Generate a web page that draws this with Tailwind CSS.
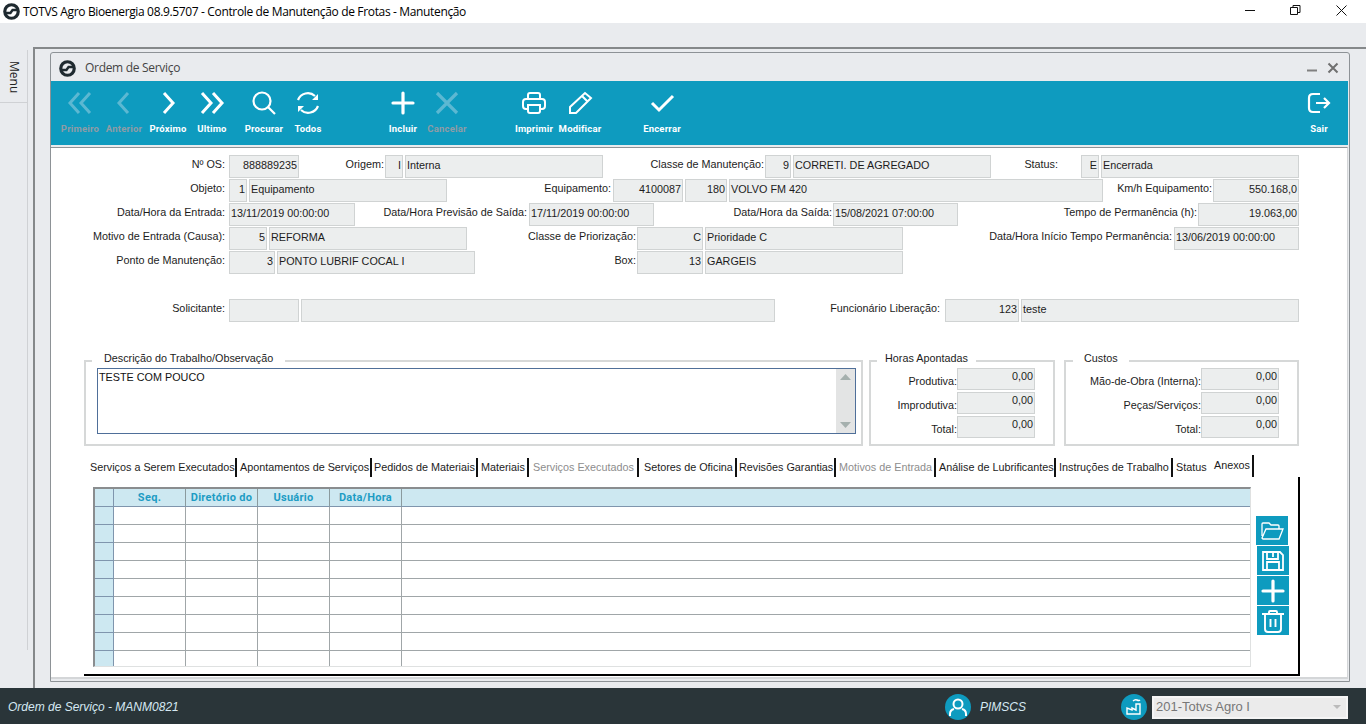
<!DOCTYPE html>
<html lang="pt"><head><meta charset="utf-8">
<script src="https://cdn.jsdelivr.net/npm/@tailwindcss/browser@4"></script>
<title>Ordem de Serviço</title></head>
<body class="w-[1366px] h-[724px] overflow-hidden flex flex-col bg-[#e9ebee] font-['Liberation_Sans',sans-serif] text-[10.800px] text-[#1c1c1c]">
<!-- title bar -->
<header class="h-[23px] bg-white flex items-center shrink-0">
  <svg class="ml-[3px] w-[17px] h-[17px]" viewBox="0 0 24 24" fill="none" stroke="#1f2a30"><circle cx="12" cy="12" r="9.500" stroke-width="4.500"/><path d="M4 14H10.500L13.500 10H20" stroke-width="3.500"/></svg>
  <span class="ml-[3px] text-[12px] text-black whitespace-nowrap font-['Open_Sans',sans-serif] tracking-[-0.35px]">TOTVS Agro Bioenergia 08.9.5707 - Controle de Manutenção de Frotas - Manutenção</span>
  <div class="ml-auto flex items-center">
    <svg class="w-[46px] h-[23px]" viewBox="0 0 46 23"><path d="M13 10.500H23" stroke="#111" fill="none"/></svg>
    <svg class="w-[46px] h-[23px]" viewBox="0 0 46 23"><path d="M12.500 7.500h7v7h-7zM15 7.500V5.500h7v7h-2.500" stroke="#111" fill="none"/></svg>
    <svg class="w-[46px] h-[23px] mr-[-4px]" viewBox="0 0 46 23"><path d="M12.500 5.500l10 10M22.500 5.500l-10 10" stroke="#111" fill="none"/></svg>
  </div>
</header>
<main class="flex-1 flex min-h-0">
  <!-- menu rail -->
  <aside class="w-[33px] shrink-0 pt-[27px]">
    <div class="w-[28px] h-[600px] border-r border-[#cfd1d4]">
      <div class="h-[53px] border-b border-[#cfd1d4] flex justify-center pt-[11px]"><span class="[writing-mode:vertical-rl] text-[12px] h-[32px] leading-[24px] text-[#222] font-['Open_Sans',sans-serif]">Menu</span></div>
    </div>
  </aside>
  <!-- frame -->
  <div class="flex-1 mt-[24px] border-l-2 border-t-2 border-[#85888a] pl-[15px] pt-[3px]">
    <section class="w-[1300px] h-[630px] border border-[#8d9296] rounded-tr-[3px] rounded-tl-[3px] flex flex-col bg-[#e9ebee]">
      <div class="h-[28px] flex items-center shrink-0 pl-[8px] pr-[7px] pt-[2px]">
        <svg class="w-[17px] h-[17px]" viewBox="0 0 24 24" fill="none" stroke="#1f2a30"><circle cx="12" cy="12" r="9.500" stroke-width="4.500"/><path d="M4 14H10.500L13.500 10H20" stroke-width="3.500"/></svg>
        <span class="ml-[9px] text-[12px] text-[#444] font-['Open_Sans',sans-serif] tracking-[-0.3px]">Ordem de Serviço</span>
        <svg class="ml-auto w-[12px] h-[12px]" viewBox="0 0 12 12"><path d="M1 8.500H11" stroke="#808080" stroke-width="2"/></svg>
        <svg class="ml-[9px] w-[12px] h-[12px] mr-[3px]" viewBox="0 0 12 12"><path d="M1.500 1.500l9 9M10.500 1.500l-9 9" stroke="#707070" stroke-width="2"/></svg>
      </div>
      <!-- toolbar -->
      <nav class="h-[64px] w-[1297px] bg-[#0e9bbf] flex shrink-0 pl-[7px] font-['Roboto',sans-serif] font-bold text-[9.500px] tracking-[0.2px]">
        <div class="w-[44px] flex flex-col items-center text-[#8f9ca6]"><svg class="w-[26px] h-[26px] mt-[9px]" viewBox="0 0 26 26" fill="none" stroke="#5cb8d2" stroke-width="3"><path d="M12 3L3 13l9 10M23 3l-9 10 9 10"/></svg><span class="mt-[6px]">Primeiro</span></div>
        <div class="w-[44px] flex flex-col items-center text-[#8f9ca6]"><svg class="w-[26px] h-[26px] mt-[9px]" viewBox="0 0 26 26" fill="none" stroke="#5cb8d2" stroke-width="3"><path d="M17 3L8 13l9 10"/></svg><span class="mt-[6px]">Anterior</span></div>
        <div class="w-[44px] flex flex-col items-center text-white"><svg class="w-[26px] h-[26px] mt-[9px]" viewBox="0 0 26 26" fill="none" stroke="#fff" stroke-width="3"><path d="M9 3l9 10-9 10"/></svg><span class="mt-[6px]">Próximo</span></div>
        <div class="w-[44px] flex flex-col items-center text-white"><svg class="w-[26px] h-[26px] mt-[9px]" viewBox="0 0 26 26" fill="none" stroke="#fff" stroke-width="3"><path d="M3 3l9 10-9 10M14 3l9 10-9 10"/></svg><span class="mt-[6px]">Ultimo</span></div>
        <div class="ml-[8px] w-[44px] flex flex-col items-center text-white"><svg class="w-[26px] h-[26px] mt-[9px]" viewBox="0 0 26 26" fill="none" stroke="#fff" stroke-width="2.200"><circle cx="11" cy="11" r="8.500"/><path d="M17 17l7 7"/></svg><span class="mt-[6px]">Procurar</span></div>
        <div class="w-[44px] flex flex-col items-center text-white"><svg class="w-[26px] h-[26px] mt-[9px]" viewBox="0 0 26 26" fill="none" stroke="#fff" stroke-width="2.200"><path d="M3 10A10.500 10.500 0 0 1 20 6M23 16A10.500 10.500 0 0 1 6 20"/><path d="M23 4v6h-6zM3 22v-6h6z" fill="#fff" stroke="none"/></svg><span class="mt-[6px]">Todos</span></div>
        <div class="ml-[51px] w-[44px] flex flex-col items-center text-white"><svg class="w-[26px] h-[26px] mt-[9px]" viewBox="0 0 26 26" fill="none" stroke="#fff" stroke-width="3.200" stroke-linecap="round"><path d="M13 3v20M3 13h20"/></svg><span class="mt-[6px]">Incluir</span></div>
        <div class="w-[44px] flex flex-col items-center text-[#8f9ca6]"><svg class="w-[26px] h-[26px] mt-[9px]" viewBox="0 0 26 26" fill="none" stroke="#5cb8d2" stroke-width="3.200"><path d="M3 3l20 20M23 3L3 23"/></svg><span class="mt-[6px]">Cancelar</span></div>
        <div class="ml-[43px] w-[44px] flex flex-col items-center text-white"><svg class="w-[26px] h-[26px] mt-[9px]" viewBox="0 0 26 26" fill="none" stroke="#fff" stroke-width="2"><path d="M7 9V5q0-2 2-2h8q2 0 2 2v4M7 19H5q-3 0-3-3v-4q0-3 3-3h16q3 0 3 3v4q0 3-3 3h-2"/><path d="M7 15h12v6q0 2-2 2H9q-2 0-2-2z"/></svg><span class="mt-[6px]">Imprimir</span></div>
        <div class="ml-[2px] w-[44px] flex flex-col items-center text-white"><svg class="w-[26px] h-[26px] mt-[9px]" viewBox="0 0 26 26" fill="none" stroke="#fff" stroke-width="2"><path d="M3 23v-6L18 3l6 5L9 23zM15 6l6 6"/></svg><span class="mt-[6px]">Modificar</span></div>
        <div class="ml-[38px] w-[44px] flex flex-col items-center text-white"><svg class="w-[26px] h-[26px] mt-[9px]" viewBox="0 0 26 26" fill="none" stroke="#fff" stroke-width="3"><path d="M3 13l7 7L24 6"/></svg><span class="mt-[6px]">Encerrar</span></div>
        <div class="ml-auto mr-[7px] w-[44px] flex flex-col items-center text-white"><svg class="w-[26px] h-[26px] mt-[9px]" viewBox="0 0 26 26" fill="none" stroke="#fff" stroke-width="2.200"><path d="M14 4H7Q3 4 3 8v10q0 4 4 4h7M10 13h13M18 8l5 5-5 5"/></svg><span class="mt-[6px]">Sair</span></div>
      </nav>
      <!-- body -->
      <div class="mt-[2px] w-[1297px] h-[532px] bg-white border-t border-[#8d9296] border-b-[#d4d6d8] border-b-2 border-r border-r-[#d4d6d8] pt-[7px]">
        <div class="flex h-[24px] ml-[1px] leading-[19px]">
          <label class="w-[177px] pr-[4px] text-right whitespace-nowrap">Nº OS:</label>
          <div class="w-[70px] h-[23px] bg-[#eceeee] border border-[#d0d3d3] pr-[1px] text-right">888889235</div>
          <label class="w-[86px] pr-[1px] text-right whitespace-nowrap">Origem:</label>
          <div class="w-[18px] h-[23px] mr-[2px] bg-[#eceeee] border border-[#d0d3d3] pr-[1px] text-right">I</div>
          <div class="w-[198px] h-[23px] bg-[#eceeee] border border-[#d0d3d3] pl-[1px]">Interna</div>
          <label class="w-[162px] pr-[1px] text-right whitespace-nowrap">Classe de Manutenção:</label>
          <div class="w-[26px] h-[23px] mr-[2px] bg-[#eceeee] border border-[#d0d3d3] pr-[1px] text-right">9</div>
          <div class="w-[198px] h-[23px] bg-[#eceeee] border border-[#d0d3d3] pl-[1px]">CORRETI. DE AGREGADO</div>
          <label class="w-[90px] pr-[23px] text-right whitespace-nowrap">Status:</label>
          <div class="w-[18px] h-[23px] mr-[2px] bg-[#eceeee] border border-[#d0d3d3] pr-[1px] text-right">E</div>
          <div class="w-[198px] h-[23px] bg-[#eceeee] border border-[#d0d3d3] pl-[1px]">Encerrada</div>
        </div>
        <div class="flex h-[24px] ml-[1px] leading-[19px]">
          <label class="w-[177px] pr-[4px] text-right whitespace-nowrap">Objeto:</label>
          <div class="w-[18px] h-[23px] mr-[2px] bg-[#eceeee] border border-[#d0d3d3] pr-[1px] text-right">1</div>
          <div class="w-[198px] h-[23px] bg-[#eceeee] border border-[#d0d3d3] pl-[1px]">Equipamento</div>
          <label class="w-[166px] pr-[2px] text-right whitespace-nowrap">Equipamento:</label>
          <div class="w-[70px] h-[23px] mr-[2px] bg-[#eceeee] border border-[#d0d3d3] pr-[1px] text-right">4100087</div>
          <div class="w-[42px] h-[23px] mr-[2px] bg-[#eceeee] border border-[#d0d3d3] pr-[1px] text-right">180</div>
          <div class="w-[374px] h-[23px] bg-[#eceeee] border border-[#d0d3d3] pl-[1px]">VOLVO FM 420</div>
          <label class="w-[110px] pr-[1px] text-right whitespace-nowrap">Km/h Equipamento:</label>
          <div class="w-[86px] h-[23px] bg-[#eceeee] border border-[#d0d3d3] pr-[1px] text-right">550.168,0</div>
        </div>
        <div class="flex h-[24px] ml-[1px] leading-[19px]">
          <label class="w-[177px] pr-[4px] text-right whitespace-nowrap">Data/Hora da Entrada:</label>
          <div class="w-[126px] h-[23px] bg-[#eceeee] border border-[#d0d3d3] pl-[1px]">13/11/2019 00:00:00</div>
          <label class="w-[174px] pr-[2px] text-right whitespace-nowrap">Data/Hora Previsão de Saída:</label>
          <div class="w-[125px] h-[23px] bg-[#eceeee] border border-[#d0d3d3] pl-[1px]">17/11/2019 00:00:00</div>
          <label class="w-[179px] pr-[1px] text-right whitespace-nowrap">Data/Hora da Saída:</label>
          <div class="w-[125px] h-[23px] bg-[#eceeee] border border-[#d0d3d3] pl-[1px]">15/08/2021 07:00:00</div>
          <label class="w-[240px] pr-[1px] text-right whitespace-nowrap">Tempo de Permanência (h):</label>
          <div class="w-[101px] h-[23px] bg-[#eceeee] border border-[#d0d3d3] pr-[1px] text-right">19.063,00</div>
        </div>
        <div class="flex h-[24px] ml-[1px] leading-[19px]">
          <label class="w-[177px] pr-[4px] text-right whitespace-nowrap">Motivo de Entrada (Causa):</label>
          <div class="w-[38px] h-[23px] mr-[2px] bg-[#eceeee] border border-[#d0d3d3] pr-[1px] text-right">5</div>
          <div class="w-[198px] h-[23px] bg-[#eceeee] border border-[#d0d3d3] pl-[1px]">REFORMA</div>
          <label class="w-[170px] pr-[1px] text-right whitespace-nowrap">Classe de Priorização:</label>
          <div class="w-[66px] h-[23px] mr-[2px] bg-[#eceeee] border border-[#d0d3d3] pr-[1px] text-right">C</div>
          <div class="w-[198px] h-[23px] bg-[#eceeee] border border-[#d0d3d3] pl-[1px]">Prioridade C</div>
          <label class="w-[271px] pr-[2px] text-right whitespace-nowrap">Data/Hora Início Tempo Permanência:</label>
          <div class="w-[125px] h-[23px] bg-[#eceeee] border border-[#d0d3d3] pl-[1px]">13/06/2019 00:00:00</div>
        </div>
        <div class="flex h-[24px] ml-[1px] leading-[19px]">
          <label class="w-[177px] pr-[4px] text-right whitespace-nowrap">Ponto de Manutenção:</label>
          <div class="w-[46px] h-[23px] mr-[2px] bg-[#eceeee] border border-[#d0d3d3] pr-[1px] text-right">3</div>
          <div class="w-[198px] h-[23px] bg-[#eceeee] border border-[#d0d3d3] pl-[1px]">PONTO LUBRIF COCAL I</div>
          <label class="w-[162px] pr-[1px] text-right whitespace-nowrap">Box:</label>
          <div class="w-[66px] h-[23px] mr-[2px] bg-[#eceeee] border border-[#d0d3d3] pr-[1px] text-right">13</div>
          <div class="w-[198px] h-[23px] bg-[#eceeee] border border-[#d0d3d3] pl-[1px]">GARGEIS</div>
        </div>
        <div class="flex h-[24px] mt-[24px] ml-[1px] leading-[19px]">
          <label class="w-[177px] pr-[4px] text-right whitespace-nowrap">Solicitante:</label>
          <div class="w-[70px] h-[23px] mr-[2px] bg-[#eceeee] border border-[#d0d3d3]"></div>
          <div class="w-[474px] h-[23px] bg-[#eceeee] border border-[#d0d3d3]"></div>
          <label class="w-[170px] pr-[5px] text-right whitespace-nowrap">Funcionário Liberação:</label>
          <div class="w-[74px] h-[23px] mr-[2px] bg-[#eceeee] border border-[#d0d3d3] pr-[1px] text-right">123</div>
          <div class="w-[278px] h-[23px] bg-[#eceeee] border border-[#d0d3d3] pl-[1px]">teste</div>
        </div>
        <!-- group boxes -->
        <div class="flex mt-[30px] ml-[33px]">
          <fieldset class="w-[779px] h-[93px] border-2 border-[#d6d8d8] pl-[11px]">
            <legend class="ml-[-5px] px-[12px] h-[16px] leading-[11px]">Descrição do Trabalho/Observação</legend>
            <div class="w-[759px] h-[66px] border border-[#4f6f99] flex justify-between text-[#111] mt-[-1px]">
              <span class="pl-[1px] leading-[14px] pt-[1px]">TESTE COM POUCO</span>
              <div class="w-[19px] bg-[#e3e4e4] flex flex-col justify-between items-center py-[5px]">
                <svg class="w-[11px] h-[6px]" viewBox="0 0 11 6"><path d="M5.500 0L11 6H0z" fill="#a5b0ae"/></svg>
                <svg class="w-[11px] h-[6px]" viewBox="0 0 11 6"><path d="M5.500 6L11 0H0z" fill="#a5b0ae"/></svg>
              </div>
            </div>
          </fieldset>
          <fieldset class="ml-[6px] w-[186px] h-[93px] border-2 border-[#d6d8d8] pl-[24px]">
            <legend class="ml-[-18px] px-[8px] h-[16px] leading-[11px]">Horas Apontadas</legend>
            <div class="flex h-[24px] mt-[-1px] leading-[15px]"><label class="w-[62px] pt-[6px] text-right">Produtiva:</label><div class="w-[78px] h-[22px] bg-[#eceeee] border border-[#d0d3d3] text-right pr-[1px]">0,00</div></div>
            <div class="flex h-[24px] leading-[15px]"><label class="w-[62px] pt-[6px] text-right whitespace-nowrap">Improdutiva:</label><div class="w-[78px] h-[22px] bg-[#eceeee] border border-[#d0d3d3] text-right pr-[1px]">0,00</div></div>
            <div class="flex h-[24px] leading-[15px]"><label class="w-[62px] pt-[6px] text-right">Total:</label><div class="w-[78px] h-[22px] bg-[#eceeee] border border-[#d0d3d3] text-right pr-[1px]">0,00</div></div>
          </fieldset>
          <fieldset class="ml-[9px] w-[235px] h-[93px] border-2 border-[#d6d8d8] pl-[10px]">
            <legend class="ml-[-3px] px-[11px] h-[16px] leading-[11px]">Custos</legend>
            <div class="flex h-[24px] mt-[-1px] leading-[15px]"><label class="w-[125px] pt-[6px] text-right whitespace-nowrap">Mão-de-Obra (Interna):</label><div class="w-[78px] h-[22px] bg-[#eceeee] border border-[#d0d3d3] text-right pr-[1px]">0,00</div></div>
            <div class="flex h-[24px] leading-[15px]"><label class="w-[125px] pt-[6px] text-right">Peças/Serviços:</label><div class="w-[78px] h-[22px] bg-[#eceeee] border border-[#d0d3d3] text-right pr-[1px]">0,00</div></div>
            <div class="flex h-[24px] leading-[15px]"><label class="w-[125px] pt-[6px] text-right">Total:</label><div class="w-[78px] h-[22px] bg-[#eceeee] border border-[#d0d3d3] text-right pr-[1px]">0,00</div></div>
          </fieldset>
        </div>
        <!-- tabs -->
        <div class="flex ml-[39px] mt-[12px] h-[19px] items-center whitespace-nowrap">
          <span class="w-[145px]">Serviços a Serem Executados</span><i class="block w-[2px] h-[19px] bg-[#111] mr-[3px]"></i>
          <span class="w-[130px]">Apontamentos de Serviços</span><i class="block w-[2px] h-[19px] bg-[#111] mr-[2px]"></i>
          <span class="w-[102px]">Pedidos de Materiais</span><i class="block w-[2px] h-[19px] bg-[#111] mr-[3px]"></i>
          <span class="w-[46px]">Materiais</span><i class="block w-[2px] h-[19px] bg-[#111] mr-[4px]"></i>
          <span class="w-[104px] text-[#8d8d8d]">Serviços Executados</span><i class="block w-[2px] h-[19px] bg-[#111] mr-[5px]"></i>
          <span class="w-[91px]">Setores de Oficina</span><i class="block w-[2px] h-[19px] bg-[#111] mr-[2px]"></i>
          <span class="w-[95px]">Revisões Garantias</span><i class="block w-[2px] h-[19px] bg-[#111] mr-[3px]"></i>
          <span class="w-[95px] text-[#8d8d8d]">Motivos de Entrada</span><i class="block w-[2px] h-[19px] bg-[#111] mr-[3px]"></i>
          <span class="w-[115px]">Análise de Lubrificantes</span><i class="block w-[2px] h-[19px] bg-[#111] mr-[3px]"></i>
          <span class="w-[112px]">Instruções de Trabalho</span><i class="block w-[2px] h-[19px] bg-[#111] mr-[3px]"></i>
          <span class="w-[38px]">Status</span>
          <span class="w-[38px] pb-[4px]">Anexos</span><i class="block w-[2px] h-[22px] bg-[#111] mb-[3px]"></i>
        </div>
        <!-- tab page -->
        <div class="ml-[33px] w-[1216px] h-[199px] border-r-2 border-b-2 border-black pl-[9px] pt-[10px] flex">
          <div class="w-[1158px] h-[180px] border-t-2 border-l-2 border-[#8a8d8f] border-r border-b border-r-[#dfe1e1] border-b-[#dfe1e1] grid grid-cols-[19px_72px_72px_72px_72px_1fr] grid-rows-[18px_repeat(8,18px)_1fr] text-center">
            <div class="bg-[#cde8f1] border-r border-b border-[#7f95ad]"></div><div class="bg-[#cde8f1] border-r border-b border-r-[#8a9a9e] border-b-[#7f95ad] font-['Roboto',sans-serif] font-bold text-[11px] tracking-[0.3px] text-[#1d9cc4] leading-[17px]">Seq.</div><div class="bg-[#cde8f1] border-r border-b border-r-[#8a9a9e] border-b-[#7f95ad] font-['Roboto',sans-serif] font-bold text-[11px] tracking-[0.3px] text-[#1d9cc4] leading-[17px]">Diretório do</div><div class="bg-[#cde8f1] border-r border-b border-r-[#8a9a9e] border-b-[#7f95ad] font-['Roboto',sans-serif] font-bold text-[11px] tracking-[0.3px] text-[#1d9cc4] leading-[17px]">Usuário</div><div class="bg-[#cde8f1] border-r border-b border-r-[#8a9a9e] border-b-[#7f95ad] font-['Roboto',sans-serif] font-bold text-[11px] tracking-[0.3px] text-[#1d9cc4] leading-[17px]">Data/Hora</div><div class="bg-[#cde8f1] border-b border-[#7f95ad]"></div>
            <div class="bg-[#cde8f1] border-r border-b border-[#7f95ad]"></div><div class="border-r border-b border-[#a0a6a8]"></div><div class="border-r border-b border-[#a0a6a8]"></div><div class="border-r border-b border-[#a0a6a8]"></div><div class="border-r border-b border-[#a0a6a8]"></div><div class="border-b border-[#a0a6a8]"></div>
            <div class="bg-[#cde8f1] border-r border-b border-[#7f95ad]"></div><div class="border-r border-b border-[#a0a6a8]"></div><div class="border-r border-b border-[#a0a6a8]"></div><div class="border-r border-b border-[#a0a6a8]"></div><div class="border-r border-b border-[#a0a6a8]"></div><div class="border-b border-[#a0a6a8]"></div>
            <div class="bg-[#cde8f1] border-r border-b border-[#7f95ad]"></div><div class="border-r border-b border-[#a0a6a8]"></div><div class="border-r border-b border-[#a0a6a8]"></div><div class="border-r border-b border-[#a0a6a8]"></div><div class="border-r border-b border-[#a0a6a8]"></div><div class="border-b border-[#a0a6a8]"></div>
            <div class="bg-[#cde8f1] border-r border-b border-[#7f95ad]"></div><div class="border-r border-b border-[#a0a6a8]"></div><div class="border-r border-b border-[#a0a6a8]"></div><div class="border-r border-b border-[#a0a6a8]"></div><div class="border-r border-b border-[#a0a6a8]"></div><div class="border-b border-[#a0a6a8]"></div>
            <div class="bg-[#cde8f1] border-r border-b border-[#7f95ad]"></div><div class="border-r border-b border-[#a0a6a8]"></div><div class="border-r border-b border-[#a0a6a8]"></div><div class="border-r border-b border-[#a0a6a8]"></div><div class="border-r border-b border-[#a0a6a8]"></div><div class="border-b border-[#a0a6a8]"></div>
            <div class="bg-[#cde8f1] border-r border-b border-[#7f95ad]"></div><div class="border-r border-b border-[#a0a6a8]"></div><div class="border-r border-b border-[#a0a6a8]"></div><div class="border-r border-b border-[#a0a6a8]"></div><div class="border-r border-b border-[#a0a6a8]"></div><div class="border-b border-[#a0a6a8]"></div>
            <div class="bg-[#cde8f1] border-r border-b border-[#7f95ad]"></div><div class="border-r border-b border-[#a0a6a8]"></div><div class="border-r border-b border-[#a0a6a8]"></div><div class="border-r border-b border-[#a0a6a8]"></div><div class="border-r border-b border-[#a0a6a8]"></div><div class="border-b border-[#a0a6a8]"></div>
            <div class="bg-[#cde8f1] border-r border-b border-[#7f95ad]"></div><div class="border-r border-b border-[#a0a6a8]"></div><div class="border-r border-b border-[#a0a6a8]"></div><div class="border-r border-b border-[#a0a6a8]"></div><div class="border-r border-b border-[#a0a6a8]"></div><div class="border-b border-[#a0a6a8]"></div>
            <div class="bg-[#cde8f1] border-r border-[#7f95ad]"></div><div class="border-r border-[#a0a6a8]"></div><div class="border-r border-[#a0a6a8]"></div><div class="border-r border-[#a0a6a8]"></div><div class="border-r border-[#a0a6a8]"></div><div></div>
          </div>
          <div class="ml-[5px] mt-[29px] flex flex-col">
            <button class="w-[32px] h-[29px] mb-[1px] bg-[#0e9bbf] flex items-center justify-center"><svg class="w-[24px] h-[20px]" viewBox="0 0 24 20" fill="none" stroke="#fff" stroke-width="1.300"><path d="M2 15V3q0-1 1-1h6l2 2h7q1 0 1 1v3M2 17L6 8h17l-4 10H3z"/></svg></button>
            <button class="w-[32px] h-[29px] mb-[1px] ml-[1px] bg-[#0e9bbf] flex items-center justify-center"><svg class="w-[24px] h-[24px]" viewBox="0 0 24 24" fill="none" stroke="#fff" stroke-width="1.800"><path d="M2 3h17l3 3v15H2zM6 3v7h11V3M12 4v4M6 21v-8h12v8"/></svg></button>
            <button class="w-[32px] h-[29px] mb-[1px] ml-[1px] bg-[#0e9bbf] flex items-center justify-center"><svg class="w-[24px] h-[24px]" viewBox="0 0 24 24" fill="none" stroke="#fff" stroke-width="3.200" stroke-linecap="round"><path d="M12 2v20M2 12h20"/></svg></button>
            <button class="w-[32px] h-[29px] ml-[1px] bg-[#0e9bbf] flex items-center justify-center"><svg class="w-[24px] h-[24px]" viewBox="0 0 24 24" fill="none" stroke="#fff" stroke-width="1.900"><path d="M1 5h22M8 5V3q0-1 1-1h6q1 0 1 1v2M4 5v15q0 3 3 3h10q3 0 3-3V5M9.500 10v8M14.500 10v8"/></svg></button>
          </div>
        </div>
      </div>
    </section>
  </div>
</main>
<footer class="h-[36px] shrink-0 bg-[#2a3539] flex items-center font-['Liberation_Sans',sans-serif] italic text-[12px] text-[#d5e8f2] border-t-2 border-white/0">
  <span class="ml-[8px]">Ordem de Serviço - MANM0821</span>
  <div class="ml-auto w-[26px] h-[26px] rounded-full bg-[#0e9bbf] flex items-center justify-center"><svg class="w-[18px] h-[18px]" viewBox="0 0 18 18" fill="none" stroke="#fff" stroke-width="2"><circle cx="9" cy="6" r="4.500"/><path d="M1 18v-2q0-4 4-5M17 18v-2q0-4-4-5"/></svg></div>
  <span class="ml-[9px] w-[46px]">PIMSCS</span>
  <div class="ml-[95px] w-[26px] h-[26px] rounded-full bg-[#0e9bbf] flex items-center justify-center"><svg class="w-[18px] h-[18px]" viewBox="0 0 18 18" fill="none" stroke="#fff" stroke-width="1.400"><path d="M2 16V10l5 2V10l4 2V6h4v10zM8 3q2-2 4-1t3 0"/></svg></div>
  <div class="ml-[5px] mr-[18px] w-[196px] h-[23px] bg-[#ebebeb] border-2 border-[#f5f5f5] flex items-center justify-between not-italic text-[#777] text-[13px] pl-[2px]"><span>201-Totvs Agro I</span><svg class="w-[8px] h-[4px] mr-[5px]" viewBox="0 0 8 4"><path d="M0 0h8L4 4z" fill="#bbb"/></svg></div>
</footer>
</body></html>
